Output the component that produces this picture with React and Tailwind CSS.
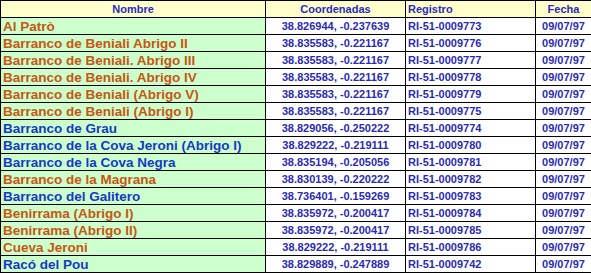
const rows = [
  ["Al Patrò", "o", "38.826944, -0.237639", "RI-51-0009773"],
  ["Barranco de Beniali Abrigo II", "o", "38.835583, -0.221167", "RI-51-0009776"],
  ["Barranco de Beniali. Abrigo III", "o", "38.835583, -0.221167", "RI-51-0009777"],
  ["Barranco de Beniali. Abrigo IV", "o", "38.835583, -0.221167", "RI-51-0009778"],
  ["Barranco de Beniali (Abrigo V)", "o", "38.835583, -0.221167", "RI-51-0009779"],
  ["Barranco de Beniali (Abrigo I)", "o", "38.835583, -0.221167", "RI-51-0009775"],
  ["Barranco de Grau", "b", "38.829056, -0.250222", "RI-51-0009774"],
  ["Barranco de la Cova Jeroni (Abrigo I)", "b", "38.829222, -0.219111", "RI-51-0009780"],
  ["Barranco de la Cova Negra", "b", "38.835194, -0.205056", "RI-51-0009781"],
  ["Barranco de la Magrana", "o", "38.830139, -0.220222", "RI-51-0009782"],
  ["Barranco del Galitero", "b", "38.736401, -0.159269", "RI-51-0009783"],
  ["Benirrama (Abrigo I)", "o", "38.835972, -0.200417", "RI-51-0009784"],
  ["Benirrama (Abrigo II)", "o", "38.835972, -0.200417", "RI-51-0009785"],
  ["Cueva Jeroni", "o", "38.829222, -0.219111", "RI-51-0009786"],
  ["Racó del Pou", "b", "38.829889, -0.247889", "RI-51-0009742"],
];

const App = () => {
  return (
    <div className="w-[591px] h-[274px] bg-white font-['Liberation_Sans',Arial,sans-serif]">
      <table className="border-collapse table-fixed w-[591px]">
        <colgroup>
          <col className="w-[265px]" />
          <col className="w-[140px]" />
          <col className="w-[130px]" />
          <col className="w-[56px]" />
        </colgroup>
        <thead>
          <tr className="h-[17px] bg-[#ffffcc] text-[#2a2ac4] text-[11px] font-bold">
            <th className="border border-black p-0 text-center leading-[15px]">Nombre</th>
            <th className="border border-black p-0 text-center leading-[15px]">Coordenadas</th>
            <th className="border border-black p-0 pl-[2px] text-left leading-[15px]">Registro</th>
            <th className="border border-black p-0 text-center leading-[15px]">Fecha</th>
          </tr>
        </thead>
        <tbody>
          {rows.map((r, i) => (
            <tr key={i} className="h-[17px]">
              <td className={"border border-black bg-[#ccffcc] p-0 pl-[2px] text-[13.5px] font-bold leading-[15px] whitespace-nowrap " + (r[1] === "o" ? "text-[#c85514]" : "text-[#1538c8]")}>
                {r[0]}
              </td>
              <td className="border border-black p-0 text-center text-[11px] font-bold text-[#2a2ab8] leading-[15px]">{r[2]}</td>
              <td className="border border-black p-0 pl-[2px] text-left text-[11px] font-bold text-[#2a2ab8] leading-[15px]">{r[3]}</td>
              <td className="border border-black p-0 text-center text-[11px] font-bold text-[#2a2ab8] leading-[15px]">09/07/97</td>
            </tr>
          ))}
        </tbody>
      </table>
    </div>
  );
};

export default App;
